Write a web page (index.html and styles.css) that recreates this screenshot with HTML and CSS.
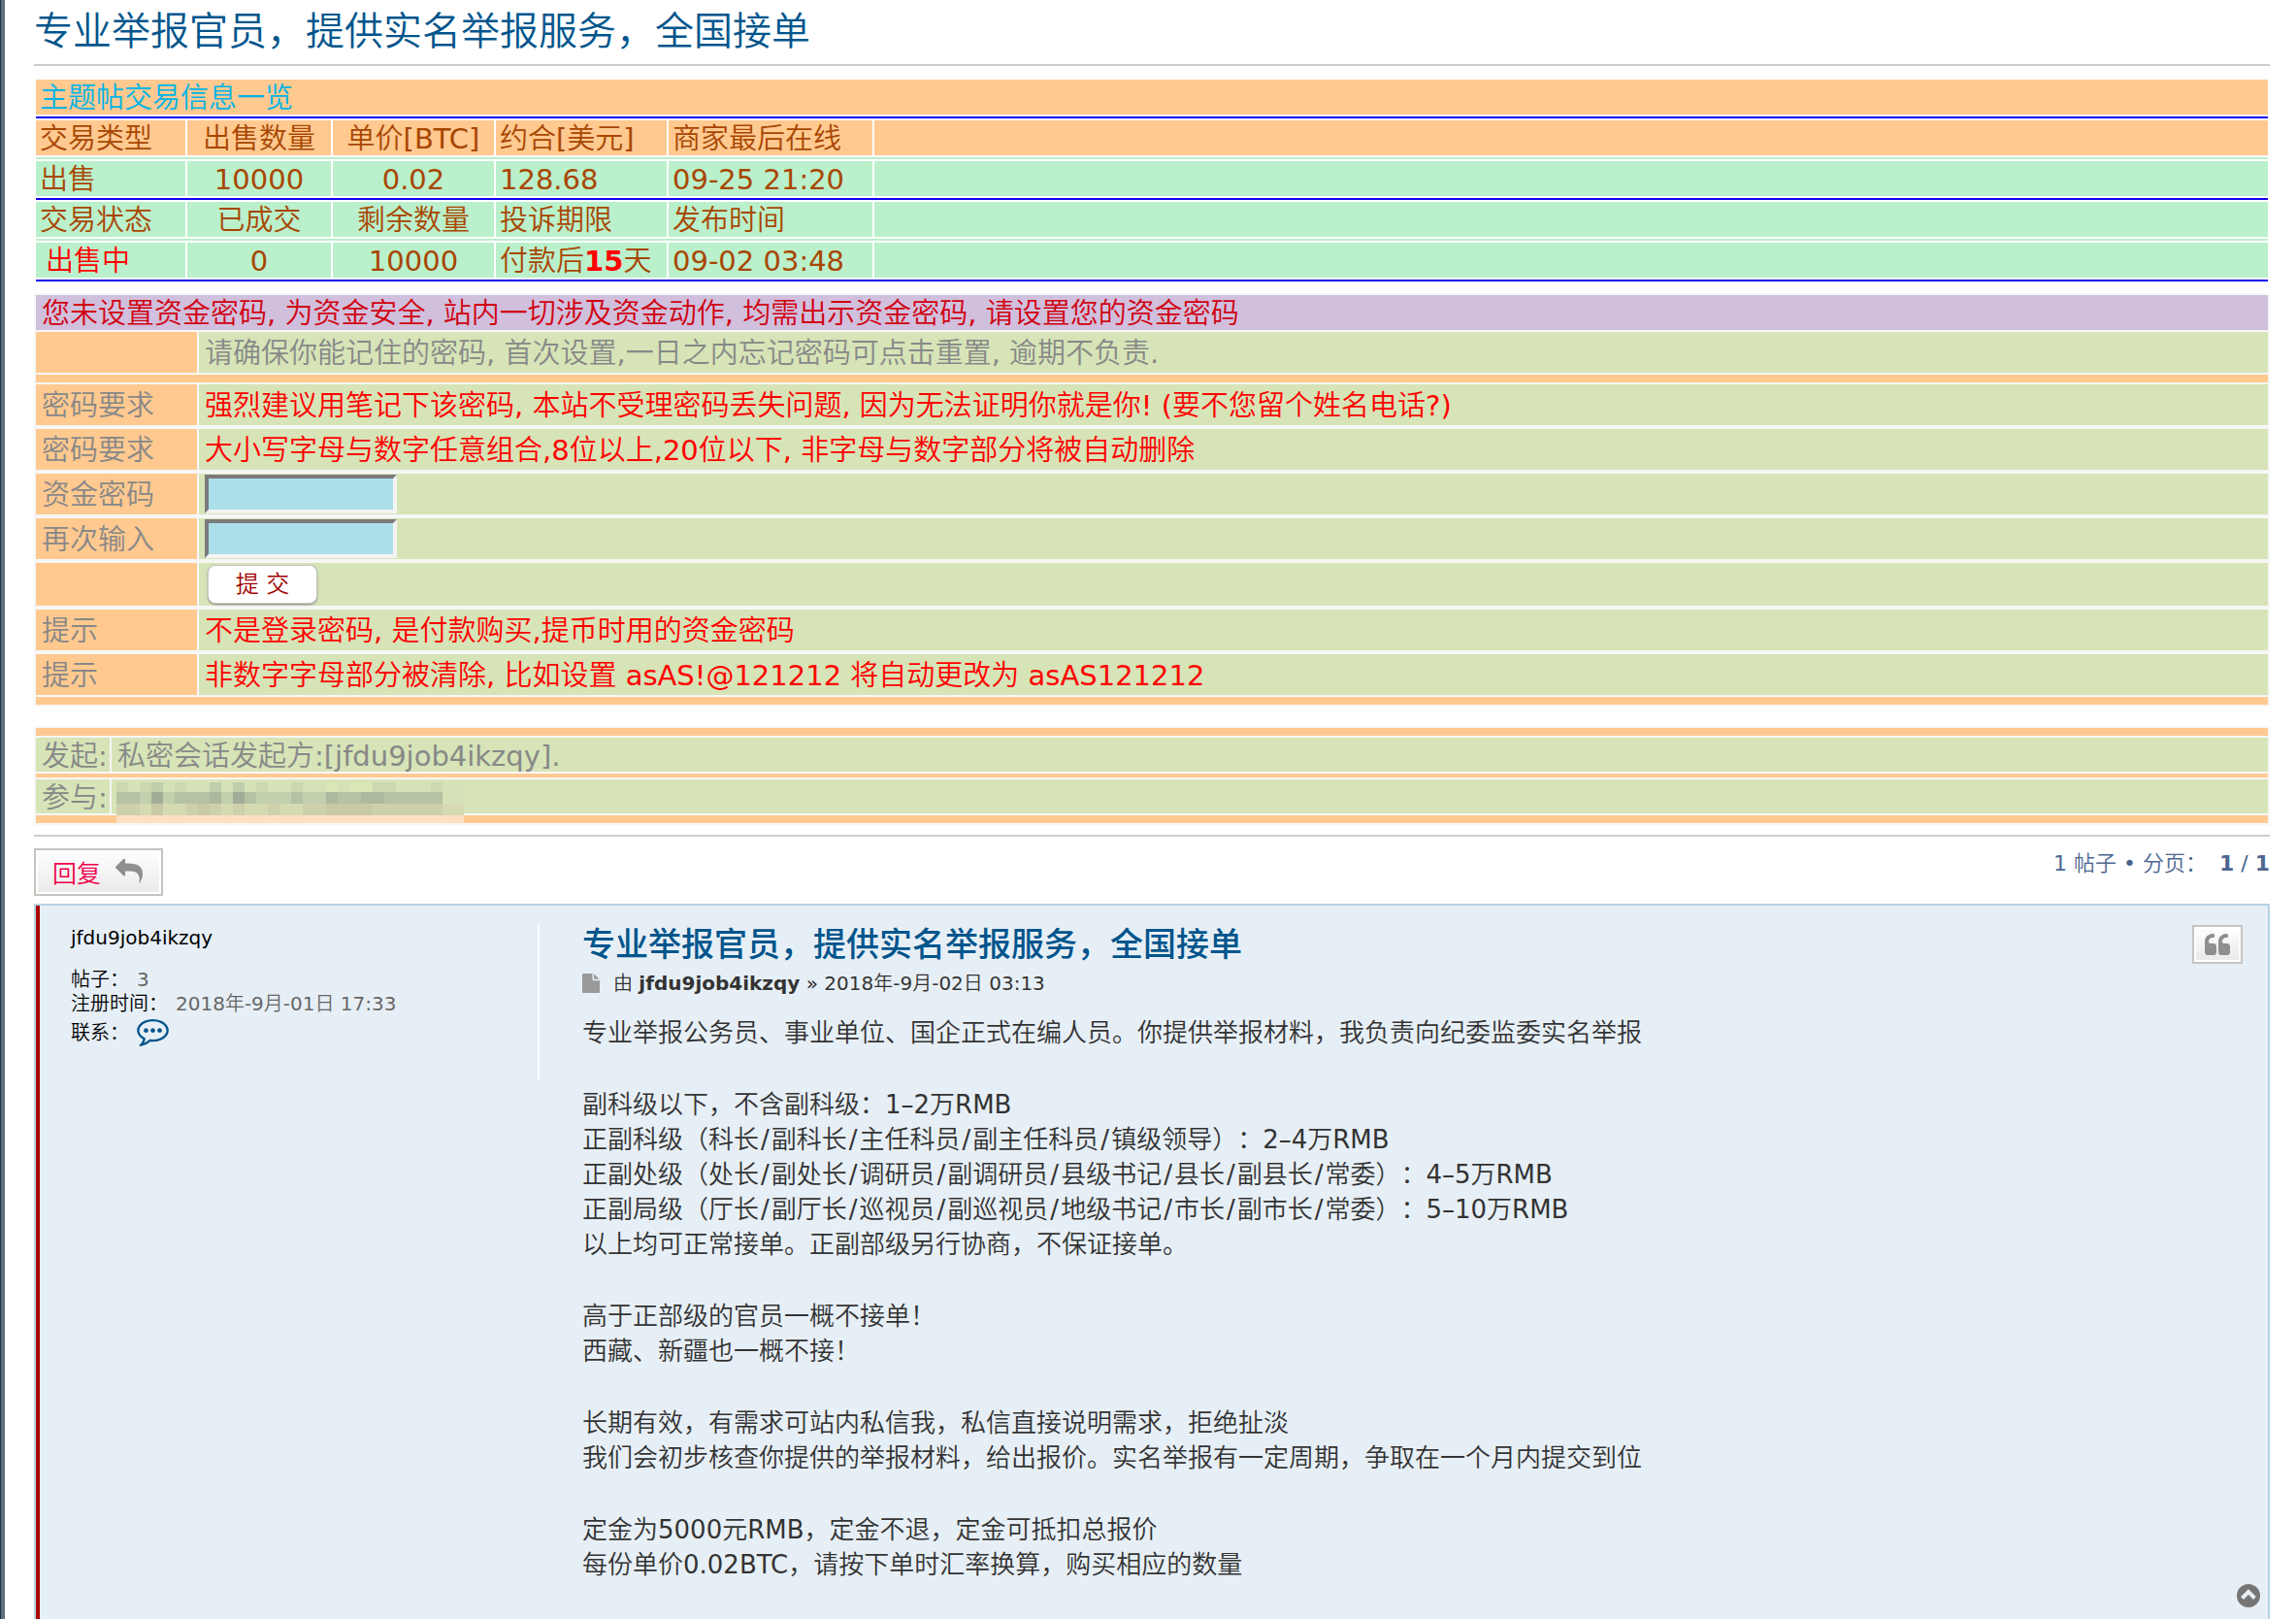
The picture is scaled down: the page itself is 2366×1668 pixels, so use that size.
FILE: index.html
```html
<!DOCTYPE html>
<html lang="zh-CN">
<head>
<meta charset="utf-8">
<meta name="viewport" content="width=device-width, initial-scale=1">
<title>专业举报官员，提供实名举报服务，全国接单</title>
<link rel="stylesheet" href="styles.css">
</head>
<body>
<main class="page">
  <h1 class="topic-title">专业举报官员，提供实名举报服务，全国接单</h1>
  <hr class="line">

  <table class="grid trade">
    <colgroup><col class="c1"><col class="c2"><col class="c3"><col class="c4"><col class="c5"><col></colgroup>
    <tbody>
      <tr class="head"><th colspan="6" class="caption">主题帖交易信息一览</th></tr>
      <tr class="rule blue"><td colspan="6"></td></tr>
      <tr class="head"><td>交易类型</td><td class="mid">出售数量</td><td class="mid">单价[BTC]</td><td>约合[美元]</td><td>商家最后在线</td><td></td></tr>
      <tr class="rule"><td colspan="6"></td></tr>
      <tr><td>出售</td><td class="mid">10000</td><td class="mid">0.02</td><td>128.68</td><td>09-25 21:20</td><td></td></tr>
      <tr class="rule blue"><td colspan="6"></td></tr>
      <tr><td>交易状态</td><td class="mid">已成交</td><td class="mid">剩余数量</td><td>投诉期限</td><td>发布时间</td><td></td></tr>
      <tr class="rule"><td colspan="6"></td></tr>
      <tr><td class="selling">出售中</td><td class="mid">0</td><td class="mid">10000</td><td>付款后<b class="days">15</b>天</td><td>09-02 03:48</td><td></td></tr>
      <tr class="rule blue"><td colspan="6"></td></tr>
    </tbody>
  </table>

  <form class="fund-form">
    <table class="grid fund">
      <colgroup><col class="label-col"><col></colgroup>
      <tbody>
        <tr class="notice"><th colspan="2">您未设置资金密码, 为资金安全, 站内一切涉及资金动作, 均需出示资金密码, 请设置您的资金密码</th></tr>
        <tr><th></th><td>请确保你能记住的密码, 首次设置,一日之内忘记密码可点击重置, 逾期不负责.</td></tr>
        <tr class="band"><td colspan="2"></td></tr>
        <tr><th>密码要求</th><td class="red">强烈建议用笔记下该密码, 本站不受理密码丢失问题, 因为无法证明你就是你! (要不您留个姓名电话?)</td></tr>
        <tr class="gap"><td colspan="2"></td></tr>
        <tr><th>密码要求</th><td class="red">大小写字母与数字任意组合,8位以上,20位以下, 非字母与数字部分将被自动删除</td></tr>
        <tr class="gap"><td colspan="2"></td></tr>
        <tr><th><label for="pw">资金密码</label></th><td class="control"><input class="field" id="pw" type="password"></td></tr>
        <tr class="gap"><td colspan="2"></td></tr>
        <tr><th><label for="pw2">再次输入</label></th><td class="control"><input class="field" id="pw2" type="password"></td></tr>
        <tr class="gap"><td colspan="2"></td></tr>
        <tr class="submit-row"><th></th><td class="control"><button class="submit" type="button">提 交</button></td></tr>
        <tr class="gap"><td colspan="2"></td></tr>
        <tr><th>提示</th><td class="red">不是登录密码, 是付款购买,提币时用的资金密码</td></tr>
        <tr class="gap"><td colspan="2"></td></tr>
        <tr><th>提示</th><td class="red">非数字字母部分被清除, 比如设置 asAS!@121212 将自动更改为 asAS121212</td></tr>
        <tr class="band"><td colspan="2"></td></tr>
      </tbody>
    </table>
  </form>

  <table class="grid fund chat">
    <colgroup><col class="chat-col"><col></colgroup>
    <tbody>
      <tr class="band"><td colspan="2"></td></tr>
      <tr><td>发起:</td><td>私密会话发起方:[jfdu9job4ikzqy].</td></tr>
      <tr class="band thin"><td colspan="2"></td></tr>
      <tr><td>参与:</td><td class="masked">
        <svg class="mosaic" width="358" height="42" viewBox="0 0 358 42" shape-rendering="crispEdges" aria-hidden="true">
          <path fill="#cbd8b0" d="M0 0h336v10H0z"/>
          <path fill="#d5e2b7" d="M12 0h12v10H12zM48 0h12v10H48zM72 0h24v10H72zM108 0h12v10h-12zM132 0h12v10h-12zM156 0h24v10h-24zM192 0h72v10h-72zM288 0h36v10h-36zM336 0h22v28h-22z"/>
          <path fill="#bfceab" d="M36 0h12v10H36zM96 0h12v10H96zM120 0h12v10h-12z"/>
          <path fill="#d9e7b6" d="M216 0h12v10h-12zM240 0h24v10h-24z"/>
          <path fill="#b5c2a3" d="M0 10h336v12H0z"/>
          <path fill="#c3d0ad" d="M24 10h12v12H24zM48 10h12v12H48zM108 10h12v12h-12zM144 10h36v12h-36zM192 10h24v12h-24z"/>
          <path fill="#a1ad98" d="M36 10h12v12H36zM120 10h12v12h-12z"/>
          <path fill="#acb99f" d="M96 10h12v12H96zM216 10h12v12h-12zM252 10h24v12h-24z"/>
          <path fill="#cdd0aa" d="M0 22h336v12H0z"/>
          <path fill="#d6dab2" d="M24 22h12v12H24zM48 22h24v12H48zM108 22h12v12h-12zM132 22h24v12h-24zM168 22h24v12h-24zM336 22h22v12h-22z"/>
          <path fill="#c8caa6" d="M36 22h12v12H36zM84 22h12v12H84zM216 22h48v12h-48z"/>
          <path fill="#ffdfc0" d="M0 34h358v8H0z"/>
        </svg></td></tr>
      <tr class="band"><td colspan="2"></td></tr>
    </tbody>
  </table>
  <hr class="line">

  <div class="action-bar">
    <button class="btn reply" type="button">回复
      <svg width="28" height="25" viewBox="0 128 1792 1536" aria-hidden="true"><path fill="currentColor" d="M1792 1120q0 166-127 451-3 7-10.5 24t-13.5 30-13 22q-12 17-28 17-15 0-23.5-10t-8.5-25q0-9 2.5-26.5t2.5-23.5q5-68 5-123 0-101-17.5-181t-48.5-138.5-80-101-105.5-69.5-133-42.5-154-21.5-175.5-6h-224v256q0 26-19 45t-45 19-45-19l-512-512q-19-19-19-45t19-45l512-512q19-19 45-19t45 19 19 45v256h224q713 0 875 403 53 134 53 333z"/></svg>
    </button>
    <div class="pagination"><span>1 帖子 • 分页：</span><span><b>1</b> / <b>1</b></span></div>
  </div>

  <article class="post">
    <aside class="profile">
      <div class="username">jfdu9job4ikzqy</div>
      <dl class="facts">
        <div><dt>帖子：</dt><dd>3</dd></div>
        <div><dt>注册时间：</dt><dd>2018年-9月-01日 17:33</dd></div>
        <div class="contact"><dt>联系：</dt><dd><a href="#contact" aria-label="联系"><svg width="33" height="28" viewBox="0 256 1792 1536" aria-hidden="true"><path fill="currentColor" d="M640 896q0 53-37.500 90.500t-90.500 37.500-90.500-37.500-37.500-90.500 37.500-90.500 90.500-37.500 90.500 37.500 37.500 90.500zm384 0q0 53-37.500 90.500t-90.500 37.500-90.500-37.500-37.500-90.500 37.500-90.500 90.500-37.500 90.500 37.500 37.500 90.500zm384 0q0 53-37.500 90.500t-90.500 37.500-90.500-37.500-37.500-90.500 37.500-90.500 90.500-37.500 90.500 37.500 37.500 90.500zm-512-512q-204 0-381.500 69.500t-282 187.500-104.500 255q0 112 71.500 213.500t201.500 175.500l87 50-27 96q-24 91-70 172 152-63 275-171l43-38 57 6q69 8 130 8 204 0 381.500-69.500t282-187.500 104.500-255-104.500-255-282-187.500-381.500-69.500zm896 512q0 174-120 321.500t-326 233-450 85.500q-70 0-145-8-198 175-460 242-49 14-114 22h-5q-15 0-27-10.500t-16-27.500v-1q-3-4-.5-12t2-10 4.500-9.500l6-9 7-8.500 8-9q7-8 31-34.500t34.500-38 31-39.500 32.500-51 27-59 26-76q-157-89-247.500-220t-90.500-281q0-174 120-321.500t326-233 450-85.500 450 85.500 326 233 120 321.500z"/></svg></a></dd></div>
      </dl>
    </aside>
    <div class="body">
      <h2 class="post-title"><a href="#post">专业举报官员，提供实名举报服务，全国接单</a></h2>
      <p class="byline">
        <svg width="18" height="20" viewBox="0 0 1536 1792" preserveAspectRatio="none" aria-hidden="true"><path fill="#999" d="M1024 512v-472q22 14 36 28l408 408q14 14 28 36h-472zm-128 32q0 40 28 68t68 28h544v1056q0 40-28 68t-68 28h-1344q-40 0-68-28t-28-68v-1600q0-40 28-68t68-28h800v544z"/></svg>
        <span>由 <b>jfdu9job4ikzqy</b> » 2018年-9月-02日 03:13</span>
      </p>
      <div class="content">
        <p>专业举报公务员、事业单位、国企正式在编人员。你提供举报材料，我负责向纪委监委实名举报</p>
        <p>副科级以下，不含副科级：1–2万RMB<br>
        正副科级（科长<i>/</i>副科长<i>/</i>主任科员<i>/</i>副主任科员<i>/</i>镇级领导）：2–4万RMB<br>
        正副处级（处长<i>/</i>副处长<i>/</i>调研员<i>/</i>副调研员<i>/</i>县级书记<i>/</i>县长<i>/</i>副县长<i>/</i>常委）：4–5万RMB<br>
        正副局级（厅长<i>/</i>副厅长<i>/</i>巡视员<i>/</i>副巡视员<i>/</i>地级书记<i>/</i>市长<i>/</i>副市长<i>/</i>常委）：5–10万RMB<br>
        以上均可正常接单。正副部级另行协商，不保证接单。</p>
        <p>高于正部级的官员一概不接单！<br>
        西藏、新疆也一概不接！</p>
        <p>长期有效，有需求可站内私信我，私信直接说明需求，拒绝扯淡<br>
        我们会初步核查你提供的举报材料，给出报价。实名举报有一定周期，争取在一个月内提交到位</p>
        <p>定金为5000元RMB，定金不退，定金可抵扣总报价<br>
        每份单价0.02BTC，请按下单时汇率换算，购买相应的数量</p>
      </div>
    </div>
    <button class="btn quote" type="button" aria-label="引用">
      <svg width="26" height="22" viewBox="0 128 1664 1408" aria-hidden="true"><path fill="currentColor" d="M768 960v384q0 80-56 136t-136 56h-384q-80 0-136-56t-56-136v-704q0-104 40.500-198.500t109.500-163.500 163.500-109.500 198.500-40.500h64q26 0 45 19t19 45v128q0 26-19 45t-45 19h-64q-106 0-181 75t-75 181v32q0 40 28 68t68 28h224q80 0 136 56t56 136zm896 0v384q0 80-56 136t-136 56h-384q-80 0-136-56t-56-136v-704q0-104 40.500-198.500t109.500-163.500 163.500-109.500 198.500-40.500h64q26 0 45 19t19 45v128q0 26-19 45t-45 19h-64q-106 0-181 75t-75 181v32q0 40 28 68t68 28h224q80 0 136 56t56 136z"/></svg>
    </button>
  </article>
</main>
<a class="to-top" href="#top" aria-label="页首"><svg width="24" height="24" viewBox="0 0 24 24" aria-hidden="true"><circle cx="12" cy="12" r="12" fill="#757575"/><path d="M5.500 14.500L12 8l6.500 6.500" fill="none" stroke="#e7eff6" stroke-width="4"/></svg></a>
</body>
</html>
```

FILE: styles.css
```css
* { box-sizing: border-box; }

body {
  margin: 0;
  background: #fff;
  color: #333;
  font-family: "DejaVu Sans", "Noto Sans CJK SC DemiLight", "Noto Sans CJK SC", sans-serif;
  font-size: 20px;
  text-spacing-trim: space-all;
}

h1, h2, p, dl, dd { margin: 0; }
a { color: #00558c; text-decoration: none; }
svg { display: block; flex: none; }

.page {
  display: flex;
  flex-direction: column;
  min-height: 100vh;
  padding: 0 27px 0 34px;
  border-left: 1px solid #17344f;
  box-shadow: inset 4px 0 #5d6e7e;
}

.topic-title {
  height: 66px;
  color: #00558c;
  font-size: 40px;
  font-weight: 400;
  line-height: 64px;
}

.line {
  width: 100%;
  height: 2px;
  margin: 0;
  border: 0;
  background: #ccc;
}

/* shared table look */
.grid {
  width: 100%;
  table-layout: fixed;
  border-collapse: separate;
  border-spacing: 2px;
  font-size: 29px;
  line-height: 32px;
}
.grid td, .grid th {
  height: 36px;
  padding: 2px 4px 0;
  font-weight: 400;
  text-align: left;
  white-space: nowrap;
}

.trade { margin: 12px 0 10px; color: #a84600; }
.trade td { background: #baf0cb; }
.trade .head td, .trade .head th { background: #ffc990; }
.trade .caption { color: #00b4e6; }
.trade .mid { text-align: center; }
.trade .rule td { height: 2px; padding: 0; background: #baf0cb; }
.trade .blue td { background: #1000f0; }
.trade .selling { padding-left: 10px; color: #f00; }
.days { color: #f00; }
.c1 { width: 154px; }
.c2 { width: 148px; }
.c3 { width: 166px; }
.c4 { width: 176px; }
.c5 { width: 210px; }

.fund { background: #f7f7f7; color: #888; }
.fund td, .fund th { height: 42px; padding: 2px 6px 0; }
.fund td { background: #d6e4b7; }
.fund th { background: #ffc990; }
.fund .notice th { height: 36px; background: #d0bfdd; color: #d00010; }
.fund .band td { height: 8px; padding: 0; background: #ffc990; }
.fund .gap td { height: 0; padding: 0; }
.fund .red { color: #f00; }
.fund .control { padding: 0 6px; }
.fund .submit-row td { height: 44px; padding: 0 9px; }
.label-col { width: 166px; }

.field {
  display: block;
  width: 198px;
  height: 40px;
  border: 4px solid;
  border-color: #7b7b7b #f4f4f4 #f4f4f4 #7b7b7b;
  background: #acdfe9;
  font-size: 24px;
}
.submit {
  display: block;
  width: 113px;
  height: 40px;
  padding: 0;
  border: 1px solid #c8c8c8;
  border-radius: 8px;
  background: #fff;
  box-shadow: 0 1px 2px #8a8a8a;
  color: #a00000;
  font: inherit;
  font-size: 24px;
  line-height: 36px;
}

.chat { margin: 20px 0 10px; }
.chat-col { width: 76px; }
.chat td { height: 35px; }
.chat .thin td { height: 4px; }
.chat .masked { position: relative; }
.mosaic { position: absolute; top: 3px; left: 5px; }

.action-bar {
  display: flex;
  justify-content: space-between;
  align-items: flex-start;
  margin: 12px 0 8px;
}
.btn {
  display: flex;
  align-items: center;
  justify-content: center;
  padding: 0;
  border: 2px solid #c7c3bf;
  background: linear-gradient(#fff, #e9e9e9);
  box-shadow: inset 0 0 0 2px #fff;
  color: #8f8f8f;
  font: inherit;
}
.reply { gap: 15px; width: 133px; height: 49px; padding: 0 2px 2px 0; color: #ee0048; font-size: 25px; }
.reply svg { color: #8f8f8f; }
.pagination { display: flex; gap: 13px; color: #4c6690; font-size: 22px; line-height: 32px; }

.post {
  display: flex;
  flex: 1;
  align-items: flex-start;
  padding: 20px 26px 20px 32px;
  border: 2px solid #b5d3e5;
  border-bottom: 0;
  background: #e7eff6;
  box-shadow: inset 4px 0 #a00;
}
.profile {
  width: 487px;
  min-height: 160px;
  padding-left: 4px;
  border-right: 2px solid #fff;
  color: #000;
}
.username { line-height: 26px; }
.facts { margin-top: 18px; line-height: 25px; }
.facts div { display: flex; align-items: center; gap: 8px; }
.facts dd { color: #666; }
.facts .contact { height: 34px; }

.body { flex: 1; padding-left: 44px; }
.post-title {
  font-family: "Noto Sans CJK SC", sans-serif;
  font-size: 34px;
  font-weight: 500;
  line-height: 36px;
}
.byline { display: flex; align-items: center; gap: 14px; margin: 10px 0 19px; line-height: 28px; }
.content { font-size: 26px; line-height: 36px; }
.content p + p { margin-top: 38px; }
.content i { padding: 0 2px; font-style: normal; }
.quote { width: 52px; height: 40px; }

.to-top { position: fixed; right: 37px; bottom: 12px; }
```
